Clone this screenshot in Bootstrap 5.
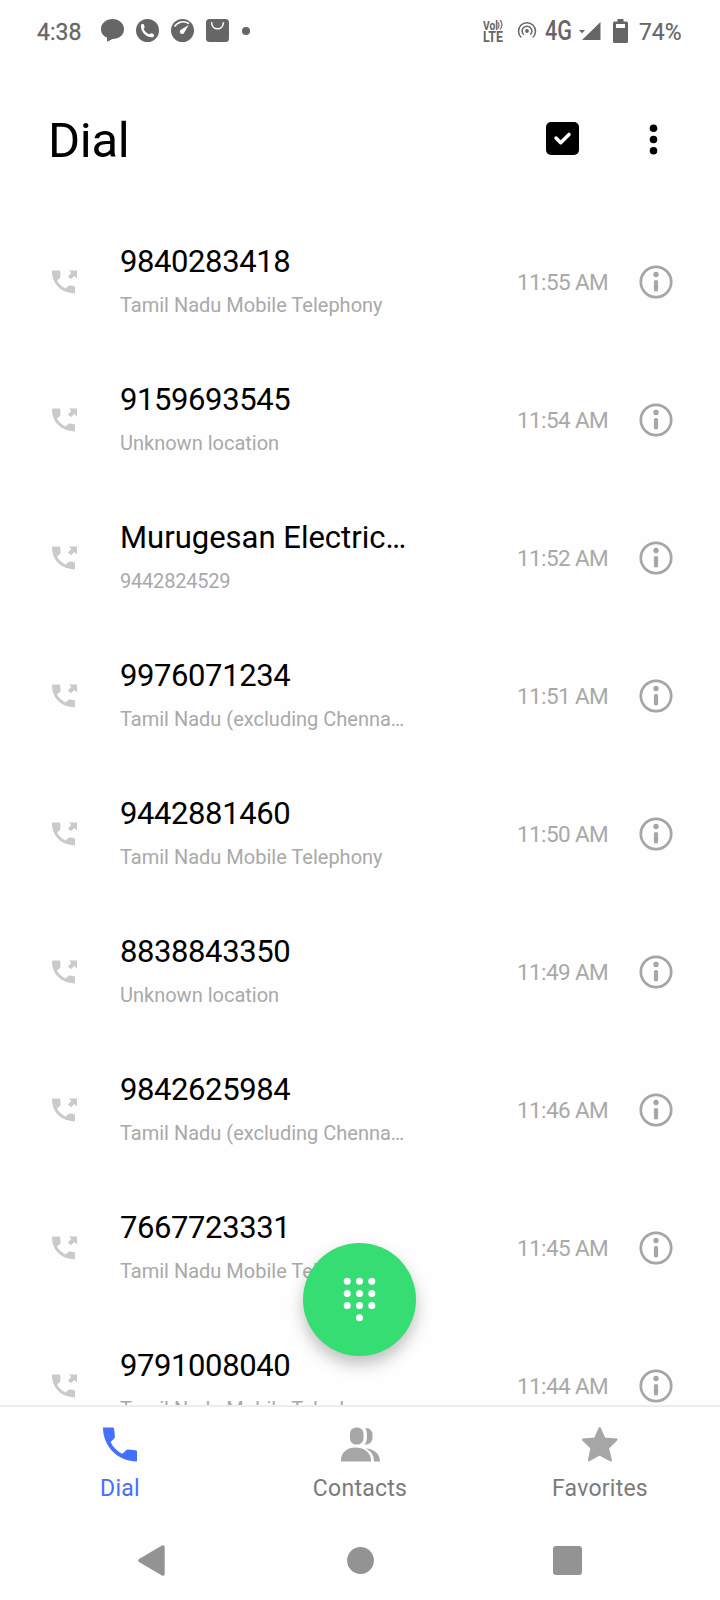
<!DOCTYPE html>
<html lang="en">
<head>
<meta charset="utf-8">
<meta name="viewport" content="width=device-width, initial-scale=1">
<title>Dial</title>
<link href="https://cdn.jsdelivr.net/npm/bootstrap@5.3.0/dist/css/bootstrap.min.css" rel="stylesheet">
<style>
body{font-family:Roboto,"Liberation Sans",sans-serif;background:#fefefe;color:#000;width:720px;height:1600px}
svg{display:block;flex:none}
.statusbar{height:61px;padding-left:37px;color:#666;font-size:23px;line-height:61px}
.statusbar svg{fill:#666;overflow:visible}
.clock{width:64px;padding-top:2px;-webkit-text-stroke:.3px #666}
.s-icons{gap:12px}
.topbar{height:152px;padding:0 56px 0 48px}
.topbar h1{font-size:49px;font-weight:400;line-height:60px;margin:50px 0 0;letter-spacing:-.3px}
.calls{height:1192px}
.call{height:138px;padding:0 47px 0 52px;flex:none}
.call svg{margin-bottom:1px}
.who{width:290px;margin-left:42px}
.who-name{font-size:31px;line-height:40px;margin-top:-3px}
.who-sub{font-size:20px;line-height:30px;color:#a9a9a9;margin-top:8px}
.who-name.digits{letter-spacing:-.4px}
.who-sub.digits{letter-spacing:-.2px}
.when{width:115px;font-size:22.5px;line-height:30px;color:#a9a9a9;letter-spacing:-.6px;margin-bottom:1px;white-space:nowrap}
.tabs{height:116px;border-top:2px solid #ededed;color:#7b7b7b;font-size:23px;letter-spacing:.25px;line-height:30px}
.tabs svg{height:37px;margin:19px 0 11px}
.tabs .on{color:#456fff}
.sysnav{height:79px;padding-left:138px}
.fab{position:absolute;left:303px;top:1243px;width:113px;height:113px;background:#35dd72;box-shadow:0 8px 16px rgba(0,0,0,.25)}
</style>
</head>
<body class="position-relative overflow-hidden d-flex flex-column">
<svg width="0" height="0" class="position-absolute">
  <symbol id="handset" viewBox="0 0 36 36"><path d="M0 .5H10Q11.300 .5 11.400 2L12.300 9.500Q12.300 11 11.300 12L7.800 15.300Q11.800 23.500 19.800 27.500L23.800 23.800Q24.500 23.100 26 23.200L33.500 24Q35 24.200 35 25.700V35.500C16 35.500 0 20.500 0 .5Z"/></symbol>
  <symbol id="outgoing" viewBox="0 0 26 24"><path d="M1 .5H7.200Q8.200 .5 8.200 1.500L8.500 6.500Q8.500 7.500 7.700 8.200L5 10.500Q8 16 13.500 18.500L16 16.200Q16.700 15.500 17.700 15.500L22 16Q23 16.200 23 17.200V23.300C9.500 23.300 0 14 0 1.500Q0 .5 1 .5Z"/><path d="M17 .5H25V8.500L22.300 6 19 9.300 15.900 6.400 19.300 3.100Z"/></symbol>
  <symbol id="info" viewBox="0 0 34 34"><circle cx="17" cy="17" r="15.200" fill="none" stroke="#a6a6a6" stroke-width="2.700"/><circle cx="17" cy="9.500" r="2.700"/><rect x="14.900" y="15" width="4.200" height="11.500" rx="1.800"/></symbol>
</svg>

<header class="statusbar d-flex">
  <span class="clock">4:38</span>
  <div class="s-icons d-flex align-items-center">
    <svg width="23" height="23" viewBox="0 0 23 23"><path d="M11.500 0C18 0 23 4.300 23 10.200S18 20 11.500 20L6 22.700V18.600C2.300 17 0 14 0 10.200 0 4.300 5 0 11.500 0Z"/></svg>
    <svg width="23" height="23" viewBox="0 0 23 23"><circle cx="11.500" cy="11.500" r="11.500"/><path d="M5 5.700Q6 4.600 7.500 5Q8.500 6.500 8.700 8.500L7.500 10Q9.200 13.500 13 15.500L14.700 14.200Q16.500 14.300 18 15.400Q18.400 17 17 18.200C11 19.500 4 12.500 5 5.700Z" fill="#fff"/></svg>
    <svg width="23" height="23" viewBox="0 0 23 23"><circle cx="11.500" cy="11.500" r="11.500"/><path d="M3.500 7.500C7 2.500 13 1.500 18 4.500" fill="none" stroke="#fff" stroke-width="1.500"/><path d="M17.700 5.900 13.300 13.400A2.300 2.300 0 1 1 9.800 10.800Z" fill="#fff"/></svg>
    <svg width="23" height="23" viewBox="0 0 23 23"><rect width="23" height="23" rx="3.500"/><path d="M5.500 3.200C6 12 17 12 17.500 3.200" fill="none" stroke="#fff" stroke-width="1.600"/></svg>
    <svg width="8" height="8" style="margin-left:1px"><circle cx="4" cy="4" r="4"/></svg>
  </div>
  <div class="d-flex align-items-center" style="margin-left:233px">
    <svg width="21" height="24" viewBox="0 0 21 24" font-weight="700"><text x="0" y="10.500" textLength="15" lengthAdjust="spacingAndGlyphs" font-size="12">Vol</text><text x="0" y="23" font-size="14" textLength="20" lengthAdjust="spacingAndGlyphs">LTE</text><path d="M15 3Q17 6 15 9.500M17 1Q21 6 17 10.500" fill="none" stroke="#777" stroke-width="1.300"/></svg>
    <svg width="20" height="20" viewBox="0 0 20 20" style="margin-left:13px"><circle cx="10" cy="10" r="1.900"/><path d="M6.800 13.800A4.900 4.900 0 1 1 13.200 13.800M4.300 16.500A8.500 8.500 0 1 1 15.700 16.500" fill="none" stroke="#666" stroke-width="1.500"/></svg>
    <svg width="29" height="31" style="margin-left:8px"><text x="0" y="25" font-size="27" font-weight="500" textLength="27" lengthAdjust="spacingAndGlyphs">4G</text></svg>
    <svg width="22" height="19" viewBox="0 0 22 19" style="margin-left:5px"><path d="M21.500 1V19H3ZM0 9H6L3 12.300Z"/></svg>
    <svg width="15" height="24" viewBox="0 0 15 24" style="margin-left:12px"><path d="M4.500 0H10.500V2.500H13.500Q15 2.500 15 4V22.500Q15 24 13.500 24H1.500Q0 24 0 22.500V4Q0 2.500 1.500 2.500H4.500ZM3 5V9H12V5Z" fill-rule="evenodd"/></svg>
    <span style="margin-left:11px;padding-top:3px;letter-spacing:-.1px;-webkit-text-stroke:.2px #666">74%</span>
  </div>
</header>

<div class="topbar d-flex justify-content-between">
  <h1>Dial</h1>
  <div class="d-flex" style="padding-top:61px">
    <svg width="33" height="33"><rect width="33" height="33" rx="5"/><path d="M10 16 14.700 20.700 23 12.400" fill="none" stroke="#fff" stroke-width="3.500" stroke-linecap="round" stroke-linejoin="round"/></svg>
    <svg width="9" height="32" style="margin:1px 6px 0 70px"><circle cx="4.500" cy="5.200" r="3.800"/><circle cx="4.500" cy="16.500" r="3.800"/><circle cx="4.500" cy="27.700" r="3.800"/></svg>
  </div>
</div>

<main class="calls overflow-hidden d-flex flex-column" id="calls"></main>

<nav class="tabs row g-0 text-center">
  <div class="col on d-flex flex-column align-items-center"><svg width="35" fill="#456fff"><use href="#handset"/></svg>Dial</div>
  <div class="col d-flex flex-column align-items-center"><svg width="40" viewBox="0 0 40 37" fill="#a6a6a6"><rect x="10" y="1.500" width="13.500" height="17" rx="6.300"/><path d="M1 35.500V34C1 26 8 21.500 15.500 21.500S31 26 31 34V35.500ZM25.500 2C30 2 32.500 5 32.500 8.500V11.500C32.500 15.500 30 18.500 24.500 18.800Q27 16 27 10.500T25.500 2ZM25.500 22.500C34 22.500 40 28 40 35.500H34C34 29 31 25 25.500 22.500Z"/></svg>Contacts</div>
  <div class="col d-flex flex-column align-items-center"><svg width="37" viewBox="0.8 0 37 37" fill="#a6a6a6" stroke="#a6a6a6" stroke-width="2" stroke-linejoin="round"><path d="M18.500 2 23.200 12.500 35.500 13.500 26.800 22 29.800 34.500 18.500 28.500 7.700 34.500 10.200 22 1.500 13.500 13.800 12.500Z"/></svg>Favorites</div>
</nav>

<footer class="sysnav d-flex align-items-center">
  <svg width="27" height="31" viewBox="0 0 27 31" fill="#939393"><path d="M1 14 24 .5Q26.700-.3 26.700 2V29Q26.700 31.300 24 30.500L1 17Q-.7 15.500 1 14Z"/></svg>
  <svg width="27" height="27" fill="#939393" style="margin-left:182px"><circle cx="13.500" cy="13.500" r="13.400"/></svg>
  <svg width="29" height="29" fill="#939393" style="margin-left:179px"><rect width="29" height="29" rx="3"/></svg>
</footer>

<button class="fab btn p-0 border-0 rounded-circle" aria-label="Keypad">
  <svg width="113" height="113" fill="#fff"><g id="keys"></g></svg>
</button>

<script>
const calls=[["9840283418","Tamil Nadu Mobile Telephony","11:55"],["9159693545","Unknown location","11:54"],["Murugesan Electric…","9442824529","11:52"],["9976071234","Tamil Nadu (excluding Chenna…","11:51"],["9442881460","Tamil Nadu Mobile Telephony","11:50"],["8838843350","Unknown location","11:49"],["9842625984","Tamil Nadu (excluding Chenna…","11:46"],["7667723331","Tamil Nadu Mobile Telephony","11:45"],["9791008040","Tamil Nadu Mobile Teleph","11:44"]];
const digits=s=>/^\d+$/.test(s)?"digits":"";
document.getElementById("calls").innerHTML=calls.map(([n,s,t])=>`<div class="call d-flex align-items-center">
<svg width="26" height="24" fill="#cacaca"><use href="#outgoing"/></svg>
<div class="who"><div class="who-name text-nowrap ${digits(n)}">${n}</div><div class="who-sub text-nowrap ${digits(s)}">${s}</div></div>
<div class="when ms-auto">${t} AM</div>
<svg width="34" height="34" fill="#a6a6a6" style="margin-left:7px"><use href="#info"/></svg></div>`).join("");
let dots="";
for(let i=0;i<10;i++){const x=i<9?44.200+12.300*(i%3):56.500,y=38.200+12.200*Math.floor(i/3);dots+=`<circle cx="${x}" cy="${y}" r="3.500"/>`}
document.getElementById("keys").innerHTML=dots;
</script>
<script src="https://cdn.jsdelivr.net/npm/bootstrap@5.3.0/dist/js/bootstrap.bundle.min.js"></script>
</body>
</html>
